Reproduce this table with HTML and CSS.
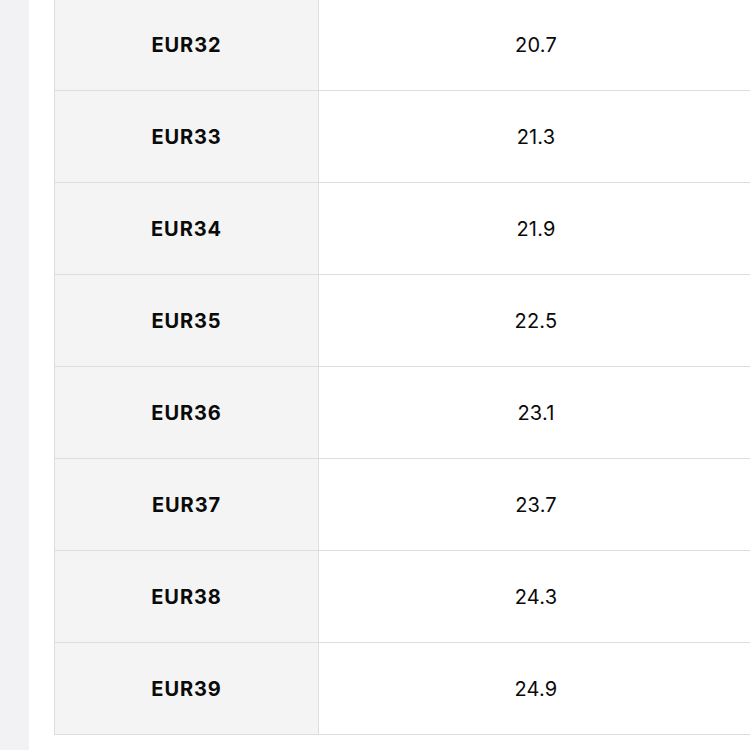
FILE: index.html
```html
<!DOCTYPE html>
<html>
<head>
<meta charset="utf-8">
<link rel="stylesheet" href="styles.css">
</head>
<body>
<div class="page">
  <aside class="rail"></aside>
  <main class="content">
    <table class="size-table">
      <tbody>
        <tr><th>EUR32</th><td>20.7</td></tr>
        <tr><th>EUR33</th><td>21.3</td></tr>
        <tr><th>EUR34</th><td>21.9</td></tr>
        <tr><th>EUR35</th><td>22.5</td></tr>
        <tr><th>EUR36</th><td>23.1</td></tr>
        <tr><th>EUR37</th><td>23.7</td></tr>
        <tr><th>EUR38</th><td>24.3</td></tr>
        <tr><th>EUR39</th><td>24.9</td></tr>
      </tbody>
    </table>
  </main>
</div>
</body>
</html>
```
FILE: styles.css
```css
html, body {
  margin: 0;
  padding: 0;
  background: #ffffff;
  overflow: hidden;
}
body {
  font-family: Inter, "Noto Sans", "Liberation Sans", sans-serif;
  color: #0a0a0a;
}
.page {
  display: flex;
  width: 750px;
  height: 750px;
  overflow: hidden;
}
.rail {
  flex: 0 0 29px;
  background: #f2f2f4;
}
.content {
  flex: 1 1 auto;
  padding-left: 25px;
  min-width: 0;
}
.size-table {
  border-collapse: collapse;
  width: 700px;
  table-layout: fixed;
  margin-top: -2px;
  border: 1px solid #dddddd;
}
.size-table tr {
  height: 92px;
}
.size-table th,
.size-table td {
  border: 1px solid #dddddd;
  text-align: center;
  vertical-align: middle;
  padding: 0;
  font-size: 20px;
}
.size-table th {
  width: 263px;
  background: #f4f4f4;
  font-weight: 700;
  letter-spacing: 0.9px;
}
.size-table td {
  background: #ffffff;
  font-weight: 400;
  letter-spacing: 0.2px;
}
```
